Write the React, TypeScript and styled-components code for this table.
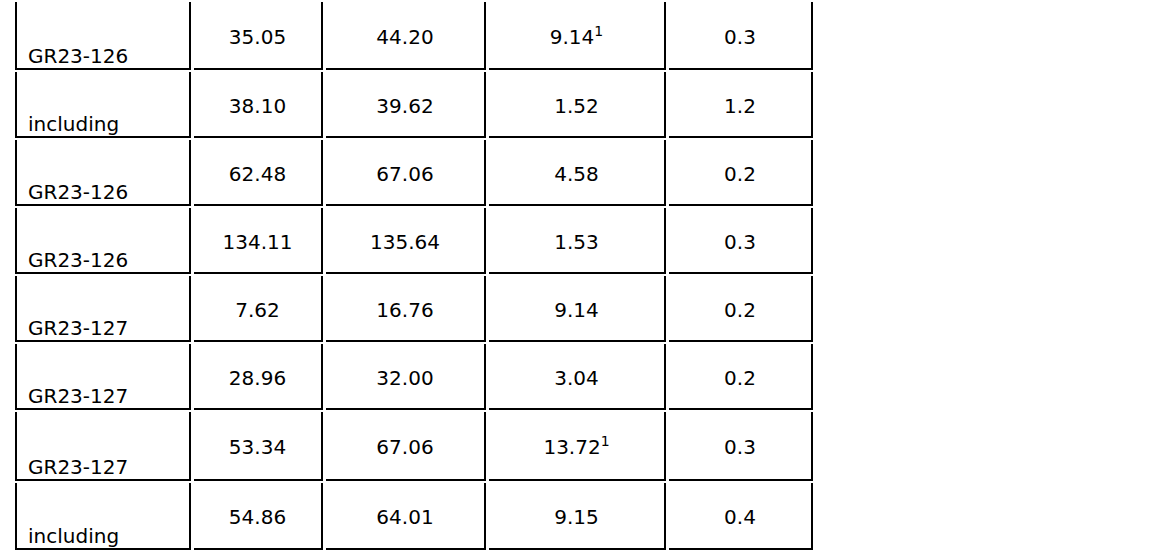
import React from "react"
import styled, { createGlobalStyle } from "styled-components"

const GlobalStyle = createGlobalStyle`
    html, body {
        margin: 0;
        padding: 0;
        background: #ffffff;
    }
    body {
        font-family: "DejaVu Sans", Verdana, sans-serif;
        color: #000000;
    }
`

const Table = styled.table`
    margin-left: 12px;
    border-collapse: separate;
    border-spacing: 3px 2px;
    table-layout: fixed;
    font-size: 20px;
`

const LabelCell = styled.td<{ $h: number }>`
    box-sizing: border-box;
    width: 176px;
    height: ${({ $h }) => $h + 2}px;
    padding: 0 0 0 11px;
    border-left: 2px solid #000;
    border-right: 2px solid #000;
    border-bottom: 2px solid #000;
    vertical-align: bottom;
    text-align: left;
    line-height: normal;
    white-space: nowrap;
`

const NumCell = styled.td<{ $w: number }>`
    box-sizing: border-box;
    width: ${({ $w }) => $w}px;
    padding: 3px 0 0 0;
    border-right: 2px solid #000;
    border-bottom: 2px solid #000;
    vertical-align: middle;
    text-align: center;
    white-space: nowrap;
`

const Note = styled.sup`
    font-size: 14px;
    vertical-align: 8px;
    line-height: 0;
`

type Row = {
    label: string
    from: string
    to: string
    length: string
    note?: boolean
    grade: string
    h: number
}

const rows: Row[] = [
    { label: "GR23-126", from: "35.05", to: "44.20", length: "9.14", note: true, grade: "0.3", h: 66 },
    { label: "including", from: "38.10", to: "39.62", length: "1.52", grade: "1.2", h: 64 },
    { label: "GR23-126", from: "62.48", to: "67.06", length: "4.58", grade: "0.2", h: 64 },
    { label: "GR23-126", from: "134.11", to: "135.64", length: "1.53", grade: "0.3", h: 64 },
    { label: "GR23-127", from: "7.62", to: "16.76", length: "9.14", grade: "0.2", h: 64 },
    { label: "GR23-127", from: "28.96", to: "32.00", length: "3.04", grade: "0.2", h: 64 },
    { label: "GR23-127", from: "53.34", to: "67.06", length: "13.72", note: true, grade: "0.3", h: 67 },
    { label: "including", from: "54.86", to: "64.01", length: "9.15", grade: "0.4", h: 65 },
]

export default function App() {
    return (
        <>
            <GlobalStyle />
            <Table>
                <tbody>
                    {rows.map((r, i) => (
                        <tr key={i}>
                            <LabelCell $h={r.h}>{r.label}</LabelCell>
                            <NumCell $w={129}>{r.from}</NumCell>
                            <NumCell $w={160}>{r.to}</NumCell>
                            <NumCell $w={177}>
                                {r.length}
                                {r.note && <Note>1</Note>}
                            </NumCell>
                            <NumCell $w={144}>{r.grade}</NumCell>
                        </tr>
                    ))}
                </tbody>
            </Table>
        </>
    )
}
